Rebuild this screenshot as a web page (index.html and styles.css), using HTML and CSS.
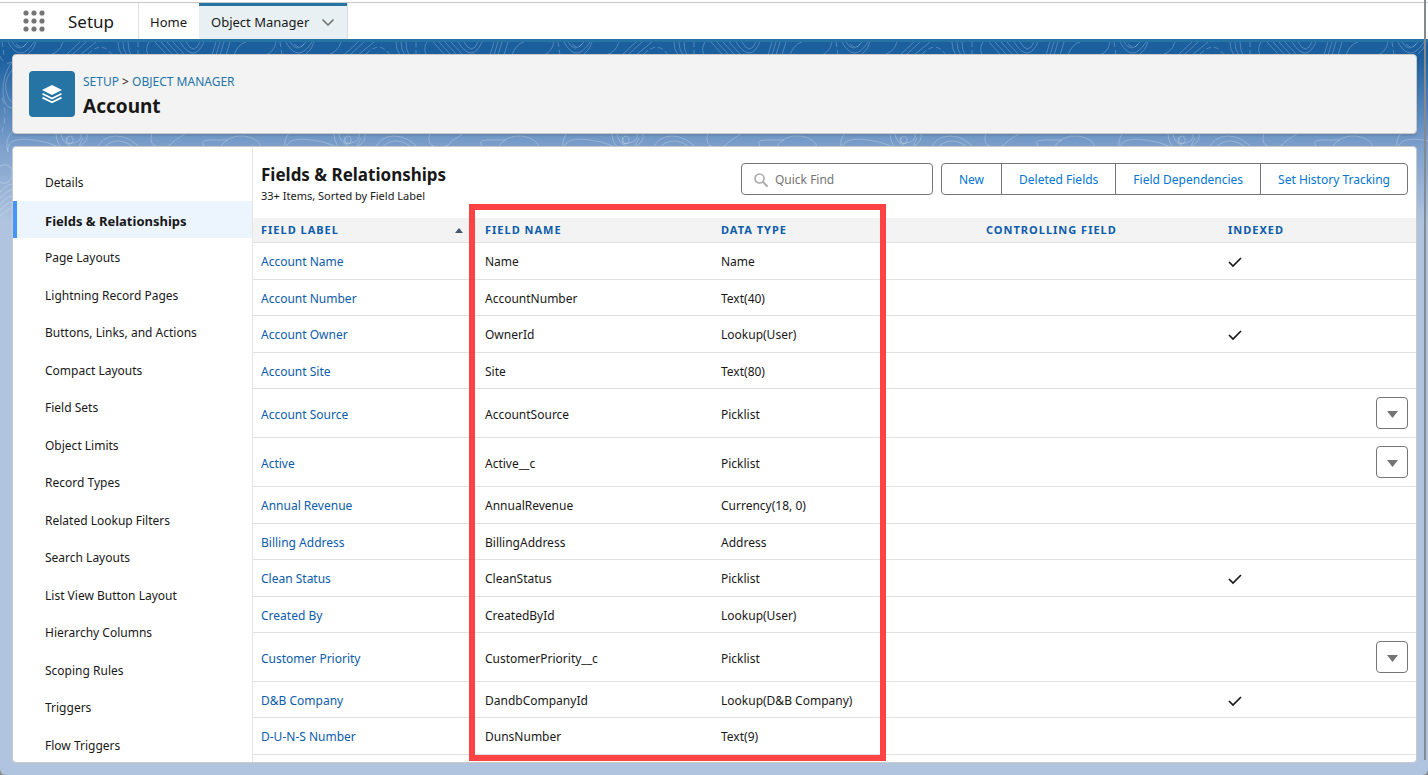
FILE: index.html
```html
<!DOCTYPE html>
<html lang="en">
<head>
<meta charset="utf-8">
<title>Object Manager | Setup</title>
<link rel="stylesheet" href="styles.css">
</head>
<body>
<header class="topbar">
  <button class="launcher" aria-label="App Launcher">
    <svg width="22" height="22" viewBox="0 0 22 22" aria-hidden="true"><g fill="#747474"><circle cx="3" cy="3" r="2.6"/><circle cx="11" cy="3" r="2.6"/><circle cx="19" cy="3" r="2.6"/><circle cx="3" cy="11" r="2.6"/><circle cx="11" cy="11" r="2.6"/><circle cx="19" cy="11" r="2.6"/><circle cx="3" cy="19" r="2.6"/><circle cx="11" cy="19" r="2.6"/><circle cx="19" cy="19" r="2.6"/></g></svg>
  </button>
  <span class="app-name">Setup</span>
  <nav class="tabs">
    <a class="tab" href="#">Home</a>
    <a class="tab tab-active" href="#">Object Manager
      <svg width="14" height="9" viewBox="0 0 14 9" aria-hidden="true"><path d="M2 2l5 5 5-5" fill="none" stroke="#747474" stroke-width="1.700" stroke-linecap="round" stroke-linejoin="round"/></svg>
    </a>
  </nav>
</header>
<main class="stage">
  <svg class="contours" width="100%" height="220" aria-hidden="true">
    <defs>
      <pattern id="topo" x="0" y="0" width="278" height="220" patternUnits="userSpaceOnUse">
        <g fill="none" stroke="#fff" stroke-opacity=".24" stroke-width="1">
          <path d="M12 0q7 12 16 0M8 0q12 22 26 0M50 13q10-3 13-13M36 0q-2 8-8 12M80 0L66 13M86 0L72 13M96 0L80 13M118 0q0 8 4 13M123 0q0 8 4 13M128 0q0 8 3 13M149 0q-4 6-1 13M155 0l12 13M161 0l12 13M167 0l12 13M173 0l12 13M180 0q14 22 24 0M186 0q8 14 14 0M216 0l-4 13M220 0l-4 13M224 0l-4 13M230 0l-4 13M246 0q-8 2-12 13M276 0q-2 10-10 13"/>
          <path stroke-dasharray="5 3" d="M88 12q14-14 24 1M138 0v13M2 0l2 13M16 2q6 6 10 0"/>
          <path d="M12 20q-10 14-9 30t9 16M12 28q-8 10-6 20t6 12"/>
          <path stroke-dasharray="6 4" d="M2 56q6 14 0 34M0 14q4 10 12 6"/>
          <path d="M8 110q-2-16 26-12t30 14M12 90q-8 8-4 20M56 91q0 14 12 18M61 91q0 8 10 14h8q10-6 8-14M81 91q2 8-8 10t-6-6M70 94a3 4 0 1 0 .1 0M96 108q6-14 20-14t26 14M102 108q6-9 16-9t18 9M83 96l-6 12M152 91q-4 12 6 14t16-6l12-8M208 108q-12-10 2-10t18 0M218 108q10-16 26-14t18 14"/>
          <path d="M0 124q8-4 12 4v8q-6 8-12 4M0 150q8-8 12-8M0 156q8-8 12-8M0 162q8-8 12-8M0 168q8-8 12-8M0 174l12-9"/>
        </g>
      </pattern>
    </defs>
    <rect width="100%" height="220" fill="url(#topo)"/>
  </svg>
  <section class="card page-head">
    <div class="object-icon">
      <svg width="22" height="22" viewBox="0 0 22 22" aria-hidden="true"><path d="M11 2L21 7 11 12 1 7z" fill="#fff"/><path d="M1.500 10.800L11 15.500l9.500-4.700M1.500 14.600L11 19.300l9.500-4.700" fill="none" stroke="#fff" stroke-width="1.800"/></svg>
    </div>
    <div class="object-title">
      <div class="crumbs"><a href="#">SETUP</a> <span>&gt;</span> <a href="#">OBJECT MANAGER</a></div>
      <h1>Account</h1>
    </div>
  </section>
  <section class="card workspace">
    <nav class="side">
      <a href="#">Details</a>
      <a class="current" href="#">Fields &amp; Relationships</a>
      <a href="#">Page Layouts</a>
      <a href="#">Lightning Record Pages</a>
      <a href="#">Buttons, Links, and Actions</a>
      <a href="#">Compact Layouts</a>
      <a href="#">Field Sets</a>
      <a href="#">Object Limits</a>
      <a href="#">Record Types</a>
      <a href="#">Related Lookup Filters</a>
      <a href="#">Search Layouts</a>
      <a href="#">List View Button Layout</a>
      <a href="#">Hierarchy Columns</a>
      <a href="#">Scoping Rules</a>
      <a href="#">Triggers</a>
      <a href="#">Flow Triggers</a>
    </nav>
    <div class="detail">
      <div class="toolbar">
        <div class="heading">
          <h2>Fields &amp; Relationships</h2>
          <p>33+ Items, Sorted by Field Label</p>
        </div>
        <label class="search">
          <svg width="14" height="14" viewBox="0 0 14 14" aria-hidden="true"><circle cx="5.500" cy="5.500" r="4.500" fill="none" stroke="#aeaeae" stroke-width="1.700"/><path d="M9 9l4 4" stroke="#aeaeae" stroke-width="2" stroke-linecap="round"/></svg>
          <input type="text" placeholder="Quick Find" aria-label="Quick Find">
        </label>
        <div class="buttons">
          <button>New</button><button>Deleted Fields</button><button>Field Dependencies</button><button>Set History Tracking</button>
        </div>
      </div>
      <table>
        <colgroup><col class="c-label"><col class="c-name"><col class="c-type"><col class="c-control"><col class="c-index"><col class="c-menu"></colgroup>
        <thead>
          <tr><th><span class="sorted">Field Label <svg width="8" height="5" viewBox="0 0 8 5" aria-hidden="true"><path d="M4 0l4 5H0z" fill="#44596f"/></svg></span></th><th>Field Name</th><th>Data Type</th><th>Controlling Field</th><th>Indexed</th><th></th></tr>
        </thead>
        <tbody id="rows"></tbody>
      </table>
      <div class="highlight"></div>
    </div>
  </section>
</main>
<div class="scroll-edge"></div>
<script src="fields.js"></script>
</body>
</html>
```
FILE: fields.js
```js
const fields = [
  ["Account Name", "Name", "Name", "indexed"],
  ["Account Number", "AccountNumber", "Text(40)"],
  ["Account Owner", "OwnerId", "Lookup(User)", "indexed"],
  ["Account Site", "Site", "Text(80)"],
  ["Account Source", "AccountSource", "Picklist", "menu"],
  ["Active", "Active__c", "Picklist", "menu"],
  ["Annual Revenue", "AnnualRevenue", "Currency(18, 0)"],
  ["Billing Address", "BillingAddress", "Address"],
  ["Clean Status", "CleanStatus", "Picklist", "indexed"],
  ["Created By", "CreatedById", "Lookup(User)"],
  ["Customer Priority", "CustomerPriority__c", "Picklist", "menu"],
  ["D&B Company", "DandbCompanyId", "Lookup(D&B Company)", "indexed"],
  ["D-U-N-S Number", "DunsNumber", "Text(9)"],
  ["", "", ""]
];
const check = '<svg class="check" width="14" height="12" viewBox="0 0 14 12" role="img" aria-label="Indexed"><path d="M1 6l4 4 8-8" fill="none" stroke="#181818" stroke-width="1.700"/></svg>';
const menu = '<button class="row-menu" aria-label="Show actions"><svg width="11" height="7" viewBox="0 0 11 7" aria-hidden="true"><path d="M0 0h11L5.500 7z" fill="#747474"/></svg></button>';
const esc = s => s.replace(/&/g, "&amp;");
document.getElementById("rows").innerHTML = fields.map(([label, name, type, extra]) =>
  `<tr${extra === "menu" ? ' class="tall"' : ""}><td>${label ? `<a href="#">${esc(label)}</a>` : ""}</td><td>${name}</td><td>${esc(type)}</td><td></td><td>${extra === "indexed" ? check : ""}</td><td>${extra === "menu" ? menu : ""}</td></tr>`
).join("");
```
FILE: styles.css
```css
* { box-sizing: border-box; }
html { background: #8c8c8c; }
body { position: relative; margin: 0; height: 100vh; display: flex; flex-direction: column; overflow: hidden; font: 12px/18px "Noto Sans", sans-serif; color: #181818; }
a { text-decoration: none; color: #0b5cab; }
button, input { font: inherit; }
h1, h2, p { margin: 0; }
.topbar { flex: none; display: flex; height: 42px; padding-top: 3px; background: linear-gradient(#fff 2px, #c9c9c9 2px, #c9c9c9 3px, #fff 3px); border-bottom: 3px solid #2574a3; }
.launcher { width: 22px; margin-left: 23px; padding: 0; border: 0; background: none; display: flex; align-items: center; }
.app-name { padding: 0 24px 0 23px; font-size: 17px; line-height: 38px; }
.tabs { display: flex; }
.tab { display: flex; align-items: center; gap: 12px; padding: 2px 12px 0 11px; font-size: 13px; color: #181818; border-left: 1px solid #e0e0e0; }
.tab-active { padding-left: 12px; background: #e8f0f3; border-right: 1px solid #dcdcdc; border-left: 0; box-shadow: inset 0 3px #2574a3; }
.stage { position: relative; flex: 1; min-height: 0; display: flex; flex-direction: column; gap: 12px; padding: 12px 11px 12px 12px; border-radius: 0 0 6px 6px; background: linear-gradient(#1b5f9f, #1b5f9f 15px, #7da0cc 105px, #b0c4df 180px); }
.contours { position: absolute; left: 0; top: 0; }
.card { position: relative; border: 1px solid #c9c9c9; border-radius: 4px; background: #fff; }
.page-head { display: flex; flex: none; gap: 8px; padding: 16px; height: 80px; background: #f3f3f3; box-shadow: 0 2px 2px rgba(0,0,0,.1); }
.object-icon { display: flex; width: 46px; height: 46px; align-items: center; justify-content: center; border-radius: 4px; background: #2574a3; }
.crumbs { line-height: 22px; }
.crumbs a { color: #2574a9; }
h1 { font-size: 19px; line-height: 26px; }
.workspace { flex: 1; min-height: 0; display: flex; overflow: hidden; }
.side { flex: none; width: 240px; padding-top: 16px; border-right: 1px solid #e5e5e5; }
.side a { display: flex; align-items: center; height: 38px; padding: 2px 0 0 28px; border-left: 4px solid transparent; color: #181818; }
.side a:nth-child(even) { height: 37px; }
.side .current { font-size: 13px; font-weight: 700; background: #ecf4fe; border-color: #4495fd; }
.detail { flex: 1; min-width: 0; position: relative; }
.toolbar { display: flex; gap: 8px; height: 71px; padding: 16px 8px 0; }
.heading { flex: 1; }
.heading p { font-size: 11px; line-height: 18px; }
h2 { font-size: 17px; line-height: 24px; }
.search { display: flex; align-items: center; gap: 7px; width: 192px; height: 32px; padding: 2px 12px 0; border: 1px solid #747474; border-radius: 4px; }
.search input { flex: 1; min-width: 0; padding: 0; border: 0; outline: 0; background: none; }
.search input::placeholder { color: #747474; opacity: 1; }
.search svg { flex: none; }
.buttons { display: flex; height: 32px; border: 1px solid #747474; border-radius: 4px; }
.buttons button { padding: 2px 17px 0; border: 0; background: none; color: #0176d3; }
.buttons button + button { border-left: 1px solid #747474; }
table { width: 100%; table-layout: fixed; border-collapse: separate; border-spacing: 0; }
.c-label { width: 224px; }
.c-name { width: 236px; }
.c-type { width: 265px; }
.c-control { width: 242px; }
.c-index { width: 140px; }
th, td { padding: 0 8px; text-align: left; border-bottom: 1px solid #e2e2e2; }
th { height: 25px; background: #f3f3f3; color: #0b5cab; font-size: 11px; letter-spacing: 1px; text-transform: uppercase; }
.sorted { display: flex; align-items: center; justify-content: space-between; padding-right: 6px; }
td { height: 37px; padding-top: 2px; }
tr:nth-child(even) td { height: 36px; }
.tall td, tr.tall:nth-child(even) td { height: 49px; padding-top: 4px; }
tr td:last-child, tr.tall td:last-child { text-align: right; padding-top: 0; }
td svg { display: block; }
.row-menu { display: inline-flex; align-items: center; justify-content: center; width: 32px; height: 32px; padding: 2px 0 0; vertical-align: middle; border: 1px solid #747474; border-radius: 4px; background: #fff; }
tr.tall:nth-child(even) td:last-child { padding-top: 0; }
.highlight { position: absolute; left: 216px; top: 57px; width: 417px; height: 557px; border: 6px solid #ff4244; pointer-events: none; }
.scroll-edge { position: absolute; right: 2px; top: 0; bottom: 15px; width: 2px; background: #858a90; }
```
